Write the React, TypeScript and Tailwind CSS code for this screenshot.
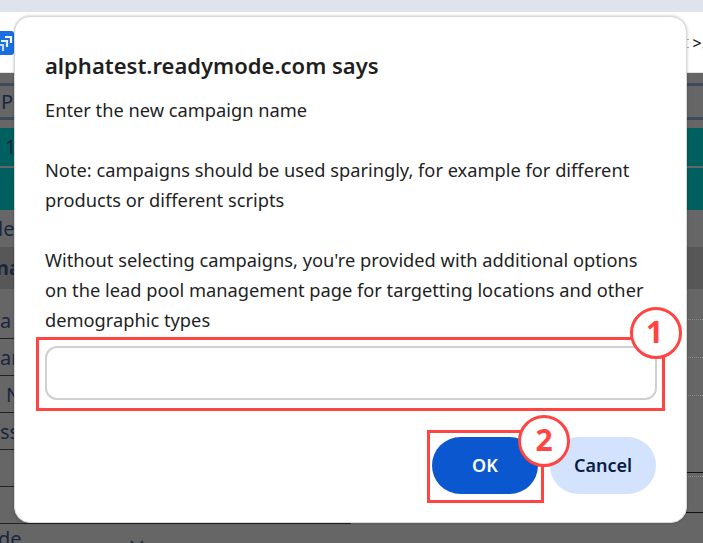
export default function App() {
  const leftRows = ["a", "ar", "N", "ss", "", ""];
  return (
    <div className="relative h-[543px] w-[703px] overflow-hidden bg-[#666666] font-['Noto_Sans','Open_Sans',sans-serif] text-[#1b2540]">
      {/* page behind */}
      <div className="h-3 bg-[#dfe3ec]" />
      <div className="flex h-[60px] items-center justify-between bg-white">
        <div className="ml-[-10px] mt-[2px] h-6 w-6 rounded-[3px] bg-[#1a6fe0]">
          <svg width="24" height="24" viewBox="0 0 24 24" fill="none" stroke="white" strokeWidth="2.2">
            <path d="M15 6 H21 V12" />
            <path d="M11 10 H17 V16" opacity="0.9" />
            <path d="M7 14 H13 V20" opacity="0.75" />
          </svg>
        </div>
        <span className="mr-[-3px] mt-[2px] text-[16px] font-medium leading-none text-[#222]">&gt;.</span>
      </div>
      <div className="h-[1px] bg-[#e4e4e4]" />
      <div className="h-[10px]" />
      <div className="flex h-[37px] items-center border-y-[3px] border-[#3f4b5c] text-[20px] leading-none">
        <span className="pl-[1px]">Pr</span>
      </div>
      <div className="h-[8px]" />
      <div className="flex h-[38px] items-center bg-[#00605f] pl-[5px] text-[20px]">1</div>
      <div className="h-[2px]" />
      <div className="h-[42px] bg-[#00605f]" />
      <div className="ml-[-2px] flex h-[37px] items-center text-[20px]">le</div>
      <div className="flex h-[42px] items-center bg-[#575757] text-[20px] font-bold">
        <span className="ml-[-4px]">na</span>
      </div>
      <div className="flex">
        <div className="w-[351px]">
          <div className="h-[13px]" />
          {leftRows.map((t, i) => (
            <div
              key={i}
              className={`flex h-[37px] items-center border-b border-[#222] pt-[2px] text-[20px] ${i === 2 ? "pl-[6px]" : "pl-0"}`}
            >
              {t}
            </div>
          ))}
          <div className="ml-[-2px] flex items-start text-[20px] leading-[30px]">
            <span>de</span>
            <svg className="ml-[108px] mt-[16px]" width="14" height="8" viewBox="0 0 14 8" fill="none" stroke="#1b2540" strokeWidth="1.5">
              <path d="M1 1 L7 7 L13 1" />
            </svg>
          </div>
        </div>
        <div className="flex-1">
          <div className="h-[31px] border-b border-dotted border-[#8a8a8a]" />
          <div className="h-[38px] border-b border-dotted border-[#8a8a8a]" />
          <div className="h-[38px] border-b border-dotted border-[#8a8a8a]" />
          <div className="h-[77px] border-b border-[#111]" />
          <div className="h-[4px] border-b border-dotted border-[#8a8a8a]" />
          <div className="h-[36px] border-b border-[#111]" />
        </div>
      </div>

      {/* small marks peeking out beside the dialog */}
      <div className="absolute left-[686px] top-[39px] h-[1px] w-[3px] bg-[#8fb4dc]" />
      <div className="absolute left-[686px] top-[47px] h-[1px] w-[3px] bg-[#8fb4dc]" />

      {/* dialog */}
      <div className="absolute left-[14px] top-[16px] h-[507px] w-[673px] rounded-[16px] border border-[#d8d8d8] bg-white pl-[30px] pr-[29px] pt-[33px] shadow-[0_0_3px_rgba(0,0,0,0.25)]">
        <h1 className="text-[22px] font-semibold leading-[30px] text-[#1f1f1f]">alphatest.readymode.com says</h1>
        <div className="mt-[15px] text-[18.25px] leading-[30px] text-[#1f1f1f]">
          <p className="mb-[30px]">Enter the new campaign name</p>
          <p className="mb-[30px]">Note: campaigns should be used sparingly, for example for different products or different scripts</p>
          <p className="pr-[4px]">Without selecting campaigns, you're provided with additional options on the lead pool management page for targetting locations and other demographic types</p>
        </div>
        <input className="mt-[11px] block h-[54px] w-full rounded-[12px] border-2 border-[#d0d0d0] bg-white outline-none" />
        <div className="mr-[1px] mt-[37px] flex justify-end gap-3">
          <button className="h-[57px] w-[106px] rounded-full bg-[#0b57d0] text-[18px] font-semibold text-white">OK</button>
          <button className="h-[57px] w-[106px] rounded-full bg-[#d3e3fd] text-[18px] font-semibold text-[#0a1d44]">Cancel</button>
        </div>
      </div>

      {/* annotations */}
      <div className="absolute left-[36px] top-[337px] h-[74px] w-[629px] border-[3px] border-[#ff4444]" />
      <div className="absolute left-[427px] top-[430px] h-[73px] w-[117px] border-[3px] border-[#ff4444]" />
      <div className="absolute left-[630px] top-[307px] flex h-[52px] w-[52px] items-center justify-center rounded-full border-[3px] border-[#ff4444] bg-white pb-[2px] pr-[3px] text-[30px] font-bold leading-none text-[#ff4444]">1</div>
      <div className="absolute left-[518px] top-[415px] flex h-[52px] w-[52px] items-center justify-center rounded-full border-[3px] border-[#ff4444] bg-white pb-[2px] text-[30px] font-bold leading-none text-[#ff4444]">2</div>
    </div>
  );
}
